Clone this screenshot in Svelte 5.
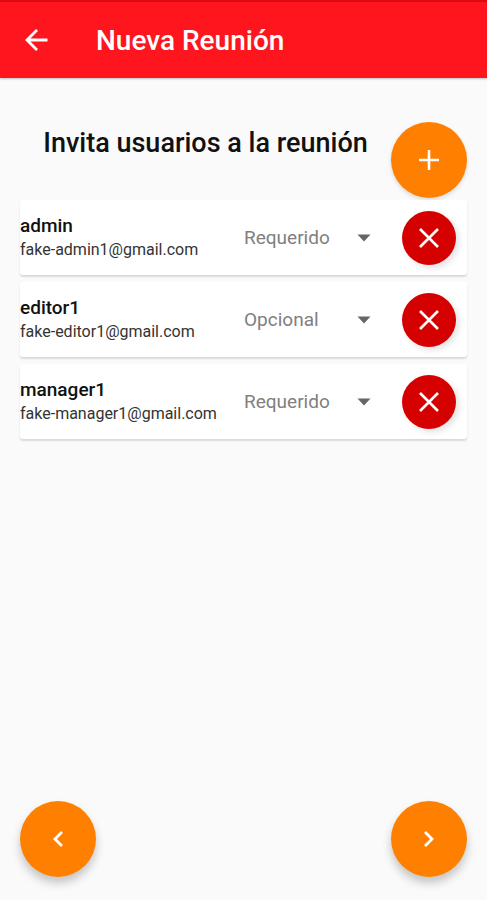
<script>
    let guests = $state([
        { name: 'admin', email: 'fake-admin1@gmail.com', role: 'Requerido' },
        { name: 'editor1', email: 'fake-editor1@gmail.com', role: 'Opcional' },
        { name: 'manager1', email: 'fake-manager1@gmail.com', role: 'Requerido' },
    ]);

    const removeGuest = index => {
        guests.splice(index, 1);
    }
</script>

<div class="screen">
    <header>
        <button class="back" aria-label="Volver">
            <svg width="24" height="24" viewBox="0 0 24 24" fill="none" stroke="#fff" stroke-width="2.8">
                <path d="M23.5 11H3M13 1L3 11l10 10" />
            </svg>
        </button>
        <h1>Nueva Reunión</h1>
    </header>

    <main>
        <div class="intro">
            <h2>Invita usuarios a la reunión</h2>
            <button class="fab" aria-label="Agregar usuario">
                <svg width="22" height="22" viewBox="0 0 22 22" fill="none" stroke="#fff" stroke-width="2.6">
                    <path d="M11 1v20M1 11h20" />
                </svg>
            </button>
        </div>

        <ul>
            {#each guests as guest, i (guest.email)}
                <li>
                    <div class="user">
                        <div class="name">{guest.name}</div>
                        <div class="email">{guest.email}</div>
                    </div>
                    <div class="role">
                        <select bind:value={guest.role} aria-label="Asistencia de {guest.name}">
                            <option>Requerido</option>
                            <option>Opcional</option>
                        </select>
                        <svg width="14" height="8" viewBox="0 0 14 8">
                            <path d="M0.5 0.5h13L7 7.5z" fill="#666" />
                        </svg>
                    </div>
                    <button class="remove" aria-label="Quitar a {guest.name}" onclick={() => removeGuest(i)}>
                        <svg width="20" height="20" viewBox="0 0 20 20" fill="none" stroke="#fff" stroke-width="2.6">
                            <path d="M1 1l18 18M19 1L1 19" />
                        </svg>
                    </button>
                </li>
            {/each}
        </ul>
    </main>

    <footer>
        <button class="fab raised" aria-label="Anterior">
            <svg width="12" height="18" viewBox="0 0 12 18" fill="none" stroke="#fff" stroke-width="2.8">
                <path d="M10 2L3 9l7 7" />
            </svg>
        </button>
        <button class="fab raised" aria-label="Siguiente">
            <svg width="12" height="18" viewBox="0 0 12 18" fill="none" stroke="#fff" stroke-width="2.8">
                <path d="M2 2l7 7-7 7" />
            </svg>
        </button>
    </footer>
</div>

<style>
    :global(body) {
        margin: 0;
        background: #fafafa;
    }
    .screen {
        min-height: 100vh;
        display: flex;
        flex-direction: column;
        font-family: Roboto, "Liberation Sans", sans-serif;
        color: #111;
    }
    header {
        box-sizing: border-box;
        height: 78px;
        padding: 2px 20px 0;
        display: flex;
        align-items: center;
        gap: 44px;
        background: #ff151d;
        border-top: 2px solid #dc0a12;
        box-shadow: 0 1px 2px rgba(0, 0, 0, 0.25);
    }
    button {
        padding: 0;
        border: 0;
        display: flex;
        align-items: center;
        justify-content: center;
        flex: none;
        cursor: pointer;
    }
    .back {
        width: 32px;
        height: 32px;
        background: none;
    }
    h1, h2 {
        margin: 0;
        line-height: 32px;
        font-weight: 500;
    }
    h1 {
        font-size: 28px;
        color: #fff;
    }
    h2 {
        flex: 1;
        padding-top: 5px;
        font-size: 27px;
        text-align: center;
    }
    main {
        flex: 1;
        padding: 44px 20px 0;
    }
    .intro {
        display: flex;
        align-items: flex-start;
    }
    .fab {
        width: 76px;
        height: 76px;
        border-radius: 50%;
        background: #ff8000;
        box-shadow: 0 2px 4px rgba(0, 0, 0, 0.14);
    }
    .fab.raised {
        box-shadow: 0 6px 10px rgba(0, 0, 0, 0.22);
    }
    ul {
        margin: 2px 0 0;
        padding: 0;
        display: flex;
        flex-direction: column;
        gap: 7px;
        list-style: none;
    }
    li {
        height: 75px;
        padding-right: 11px;
        display: flex;
        align-items: center;
        background: #fff;
        border-radius: 3px;
        box-shadow: 0 2px 2px rgba(0, 0, 0, 0.13);
    }
    .user {
        flex: 1;
        min-width: 0;
    }
    .name {
        font-size: 19px;
        line-height: 24px;
        font-weight: 500;
    }
    .email {
        font-size: 16px;
        line-height: 24px;
        color: #333;
    }
    .role {
        width: 127px;
        margin-right: 31px;
        display: grid;
        align-items: center;
    }
    .role select, .role svg {
        grid-area: 1 / 1;
    }
    .role svg {
        justify-self: end;
        pointer-events: none;
    }
    select {
        width: 100%;
        padding: 0;
        border: 0;
        appearance: none;
        background: none;
        font-family: inherit;
        font-size: 19px;
        line-height: 24px;
        color: #808080;
    }
    .remove {
        width: 54px;
        height: 54px;
        border-radius: 50%;
        background: #d50000;
        box-shadow: 3px 3px 6px rgba(0, 0, 0, 0.12);
    }
    footer {
        padding: 0 20px 23px;
        display: flex;
        justify-content: space-between;
    }
</style>
